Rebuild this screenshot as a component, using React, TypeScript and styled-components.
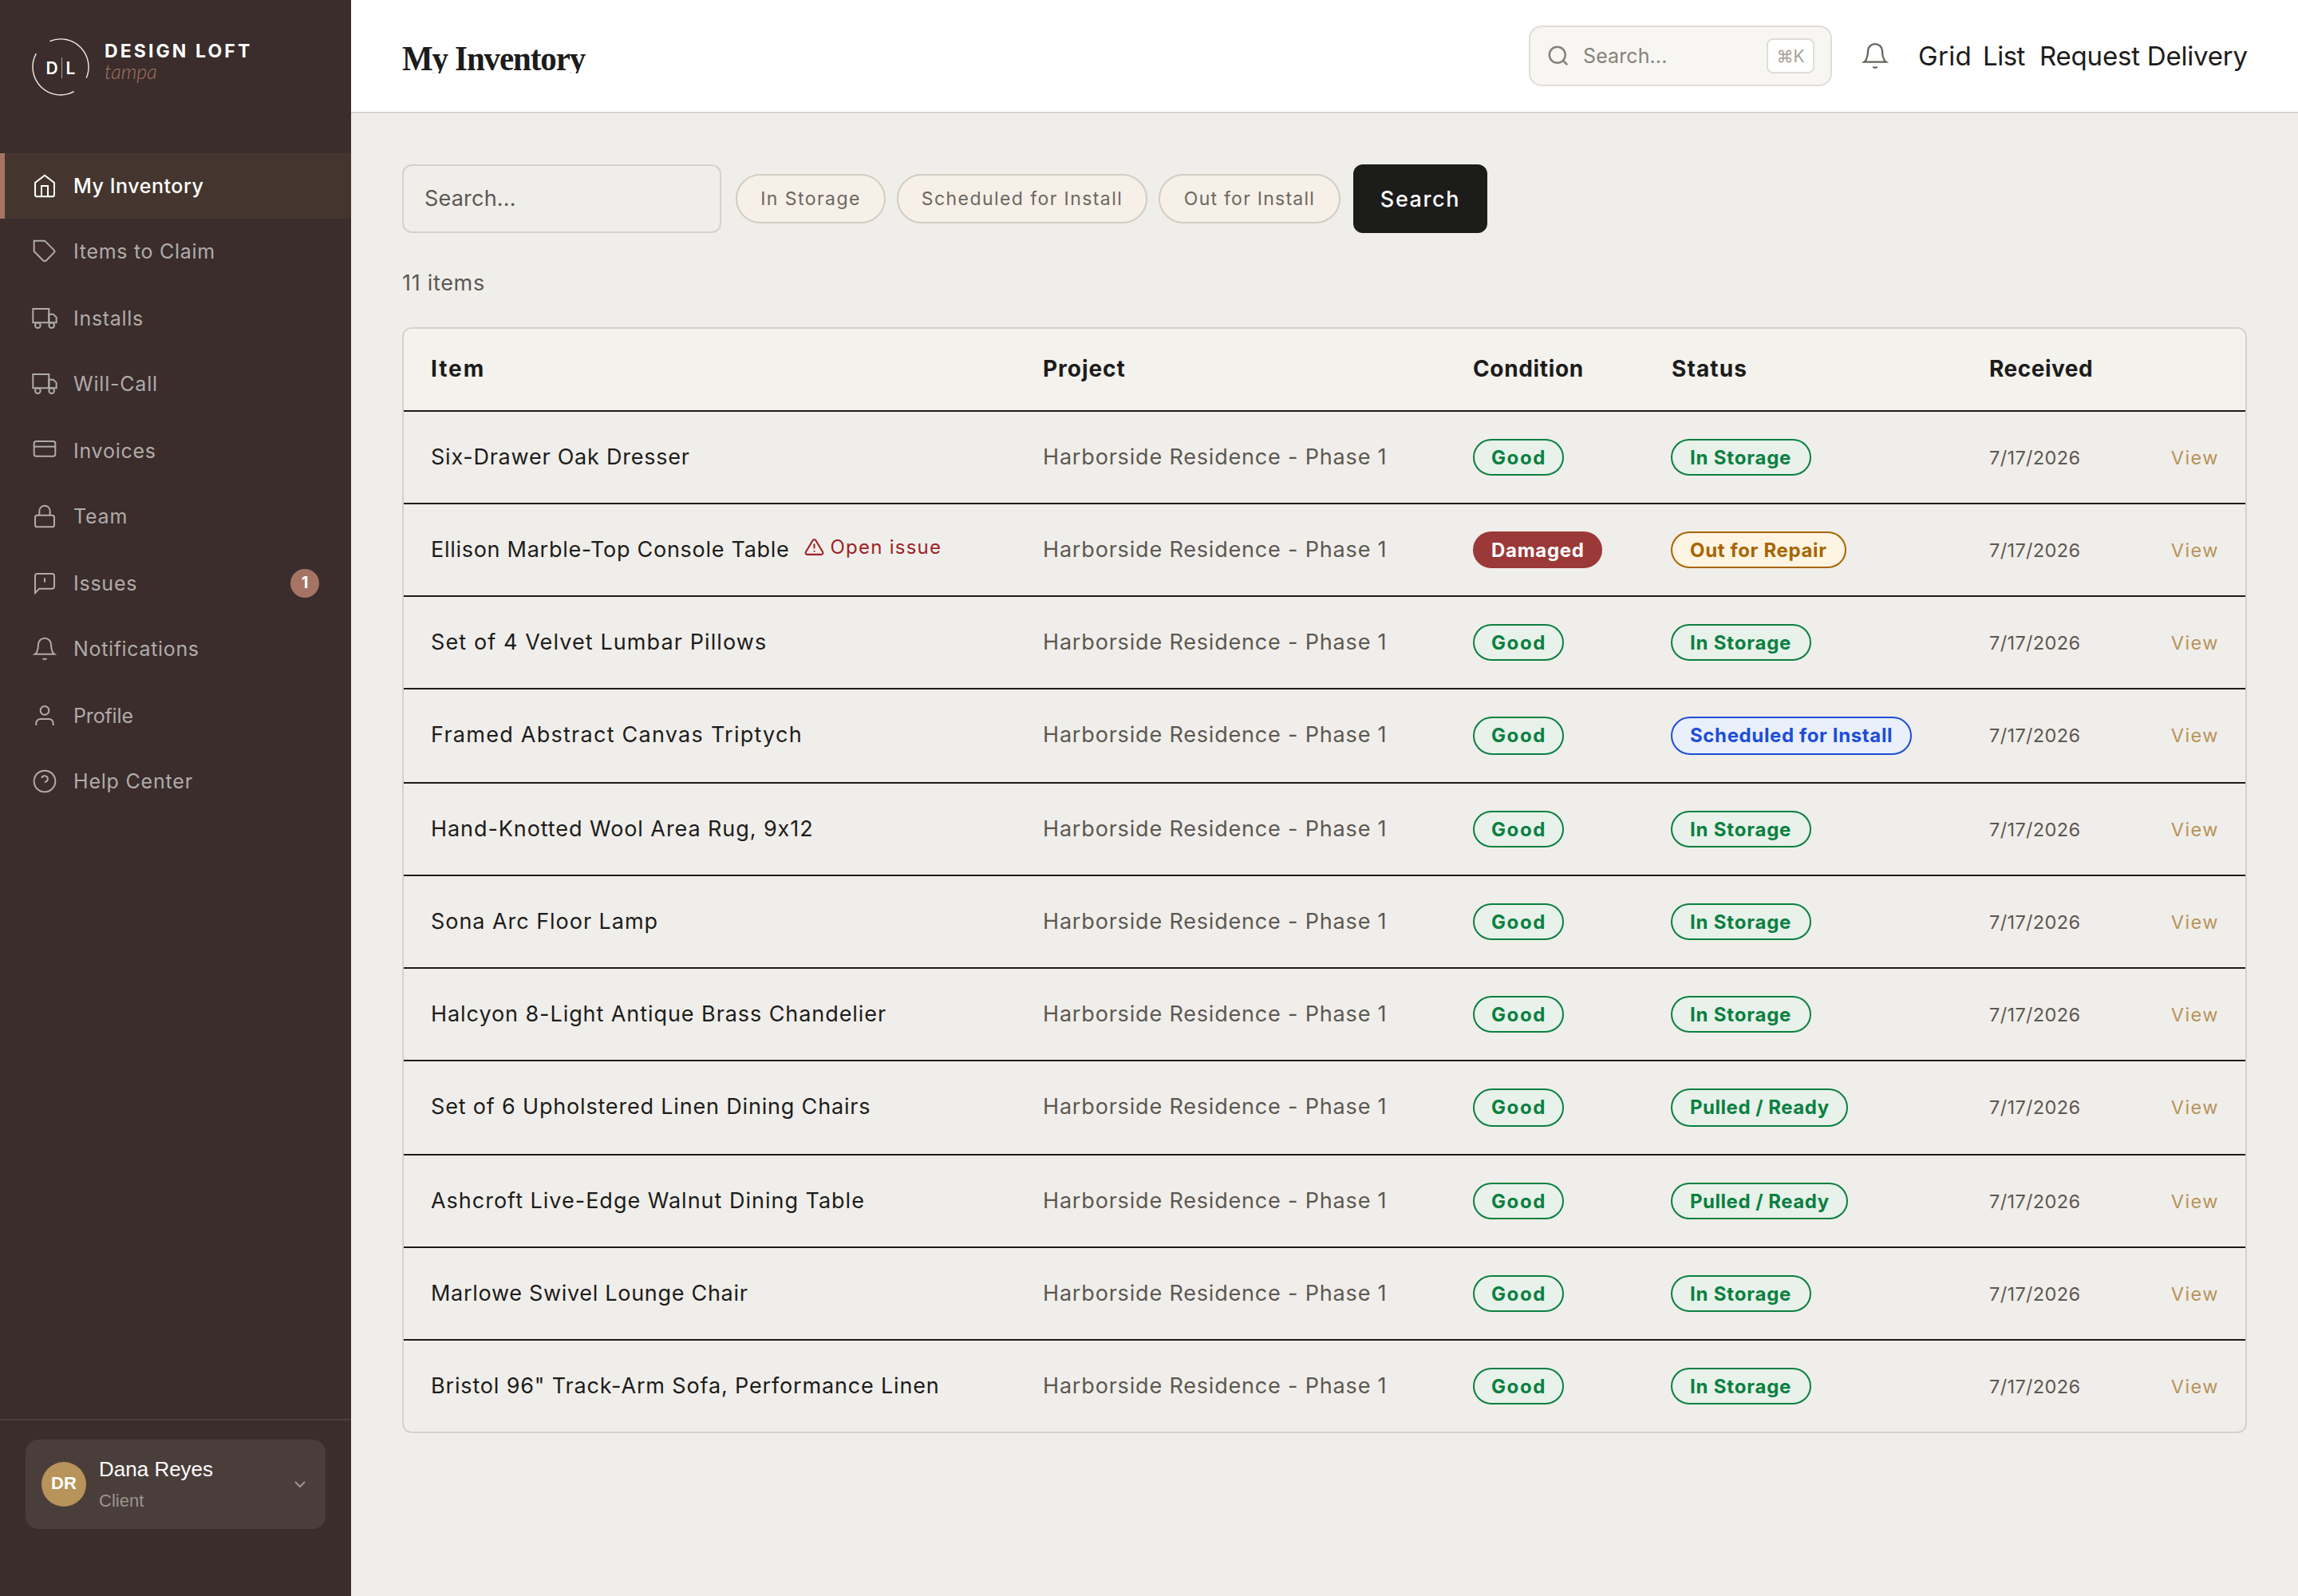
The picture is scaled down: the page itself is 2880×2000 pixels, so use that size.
import React from "react";
import styled, { createGlobalStyle } from "styled-components";

const sans = `Inter, "Liberation Sans", sans-serif`;

const GlobalStyle = createGlobalStyle`
  *, *::before, *::after { box-sizing: border-box; }
  body { margin: 0; background: #f0eeea; font-family: ${sans}; color: #1c1c1b; }
  h1, p { margin: 0; font-weight: inherit; }
`;

/* Text with its own tracking, in pixels */
const Tracked = styled.span<{ $ls: number }>`
  letter-spacing: ${(p) => p.$ls}px;
  white-space: nowrap;
`;

const Page = styled.div`
  display: flex;
  width: 2880px;
  height: 2000px;
  overflow: hidden;
`;

/* ---------- Sidebar ---------- */

const Sidebar = styled.aside`
  display: flex;
  flex-direction: column;
  flex: none;
  width: 440px;
  background: #3a2d2b;
`;

const Brand = styled.div`
  display: flex;
  gap: 19px;
  height: 192px;
  padding: 48px 40px 0;
`;

const BrandMark = styled.svg`
  flex: none;
  width: 72px;
  height: 72px;
  overflow: visible;
  font-family: ${sans};
`;

const BrandText = styled.div`
  display: flex;
  flex-direction: column;
  padding-top: 2px;
`;

const BrandName = styled.span`
  font-size: 23px;
  font-weight: 700;
  line-height: 28px;
  letter-spacing: 3.1px;
  white-space: nowrap;
  color: #fff;
`;

const BrandCity = styled.span`
  margin-top: -2px;
  font-family: Lato, ${sans};
  font-size: 25px;
  font-style: italic;
  font-weight: 300;
  line-height: 26px;
  color: #a67464;
`;

const Nav = styled.nav`
  display: flex;
  flex-direction: column;
  flex: 1;
`;

const NavItem = styled.a<{ $active?: boolean }>`
  display: flex;
  align-items: center;
  gap: 20px;
  height: 82px;
  padding: 0 40px 0 ${(p) => (p.$active ? 34 : 40)}px;
  border-left: ${(p) => (p.$active ? "6px solid #a67464" : "0")};
  background: ${(p) => (p.$active ? "#44362f" : "transparent")};
  color: ${(p) => (p.$active ? "#fff" : "#b0abaa")};
  font-size: 25px;
  font-weight: ${(p) => (p.$active ? 500 : 400)};

  &:nth-child(even) { margin-bottom: 2px; }
`;

const Icon = styled.svg<{ $size: number; $stroke?: number }>`
  flex: none;
  width: ${(p) => p.$size}px;
  height: ${(p) => p.$size}px;
  fill: none;
  stroke: currentColor;
  stroke-width: ${(p) => p.$stroke ?? 1.5};
`;

const NavCount = styled.span`
  display: grid;
  place-items: center;
  width: 36px;
  height: 36px;
  margin-left: auto;
  padding-bottom: 2px;
  border-radius: 50%;
  background: #a67464;
  color: #fff;
  font-size: 20px;
  font-weight: 700;
`;

const SidebarFooter = styled.div`
  height: 222px;
  padding: 24px 32px;
  border-top: 2px solid #4a3e3b;
`;

const UserCard = styled.div`
  display: flex;
  align-items: center;
  height: 112px;
  padding: 0 20px;
  border-radius: 16px;
  background: #4a3e3b;
  font-family: "Liberation Sans", Arial, sans-serif;
`;

const Avatar = styled.span`
  display: grid;
  place-items: center;
  width: 56px;
  height: 56px;
  margin-right: 16px;
  padding-bottom: 2px;
  border-radius: 50%;
  background: #b8935a;
  color: #fff;
  font-size: 22px;
  font-weight: 700;
`;

const UserInfo = styled.div`
  display: flex;
  flex-direction: column;
  flex: 1;
  gap: 6px;
`;

const UserName = styled.span`
  font-size: 26px;
  line-height: 36px;
  color: #fff;
`;

const UserRole = styled.span`
  font-size: 22px;
  line-height: 32px;
  color: #9b9491;
`;

const Chevron = styled(Icon)`
  color: #9b9491;
`;

/* ---------- Header ---------- */

const Content = styled.div`
  display: flex;
  flex-direction: column;
  flex: 1;
  min-width: 0;
`;

const Header = styled.header`
  display: flex;
  align-items: center;
  height: 142px;
  padding: 0 64px;
  border-bottom: 2px solid #d6d4ce;
  background: #fff;
`;

const Title = styled.h1`
  flex: 1;
  height: 44px;
  padding-top: 3px;
  overflow: hidden;
  font-family: "Liberation Serif", serif;
  font-size: 45px;
  font-weight: 700;
  line-height: 44px;
  letter-spacing: -1.2px;
  white-space: nowrap;
  transform: scaleX(0.91);
  transform-origin: left;
`;

const QuickSearch = styled.div`
  display: flex;
  align-items: center;
  gap: 16px;
  width: 380px;
  height: 76px;
  margin-right: 36px;
  padding: 0 20px;
  border: 2px solid #dfddd8;
  border-radius: 16px;
  background: #f7f6f2;
  color: #86827a;
  font-size: 25px;
`;

const Shortcut = styled.kbd`
  display: grid;
  place-items: center;
  width: 60px;
  height: 44px;
  margin-left: auto;
  border: 2px solid #dfddd8;
  border-radius: 8px;
  background: #fff;
  color: #a5a098;
  font-family: ${sans};
  font-size: 21px;
`;

const BellButton = styled.span`
  display: flex;
  margin-right: 36px;
  color: #66635d;
`;

const HeaderLinks = styled.div`
  display: flex;
  width: 412px;
  font-size: 33px;
`;

const HeaderLink = styled(Tracked)<{ $w: number }>`
  width: ${(p) => p.$w}px;
`;

/* ---------- Filters ---------- */

const Main = styled.main`
  padding: 64px;
`;

const Filters = styled.div`
  display: flex;
  align-items: center;
`;

const SearchField = styled.div`
  display: flex;
  align-items: center;
  width: 400px;
  height: 86px;
  margin-right: 18px;
  padding: 0 0 2px 26px;
  border: 2px solid #d4d2cc;
  border-radius: 12px;
  color: #5c5852;
  font-size: 27px;
`;

const Chip = styled.span<{ $w: number }>`
  display: flex;
  align-items: center;
  justify-content: center;
  width: ${(p) => p.$w}px;
  height: 62px;
  margin-right: 14px;
  border: 2px solid #d2cdc4;
  border-radius: 31px;
  background: #f6f0e8;
  color: #6c6760;
  font-size: 23px;
`;

const SearchButton = styled.button`
  width: 168px;
  height: 86px;
  margin-left: 2px;
  padding: 0;
  border: 0;
  border-radius: 12px;
  background: #1c1c1b;
  color: #fff;
  font-family: ${sans};
  font-size: 27px;
  font-weight: 500;
`;

const Count = styled.p`
  height: 118px;
  padding-top: 4px;
  line-height: 118px;
  color: #5c5852;
  font-size: 27px;
`;

/* ---------- Table ---------- */

const Table = styled.div`
  overflow: hidden;
  border: 2px solid #d4d2cc;
  border-radius: 12px;
  font-size: 27px;
`;

const Row = styled.div`
  display: grid;
  grid-template-columns: 767px 539px 249px 398px 198px 1fr;
  align-items: center;
  height: 116px;
  border-bottom: 2px solid #1c1c1b;

  &:nth-child(4n + 1) { height: 118px; padding-bottom: 2px; }
  &:last-child { height: 114px; border-bottom: 0; }
`;

const HeadRow = styled(Row)`
  && { height: 104px; padding-bottom: 2px; }
  background: #f4f2ed;
  font-size: 28px;
  font-weight: 700;
`;

const Cell = styled.div`
  display: flex;
  align-items: center;
  padding-left: 34px;
  white-space: nowrap;
`;

const TextCell = styled(Cell)`
  padding-bottom: 2px;
`;

const ProjectCell = styled(TextCell)`
  color: #5c5852;
`;

const BadgeCell = styled(Cell)`
  padding-left: 33px;
`;

const DateCell = styled(Cell)`
  color: #5c5852;
  font-size: 23.5px;
`;

const LinkCell = styled(Cell)`
  justify-content: flex-end;
  padding-right: 33px;
  color: #b8935a;
  font-size: 23.5px;
`;

const OpenIssue = styled.span`
  display: inline-flex;
  align-items: center;
  gap: 8px;
  margin-left: 18px;
  padding-bottom: 5px;
  color: #9b2226;
  font-size: 24px;
`;

const tones = {
  green: { fg: "#0a8040", bg: "#e8f1ea", line: "#0a8040" },
  red: { fg: "#ffffff", bg: "#9b3838", line: "#9b3838" },
  amber: { fg: "#a86400", bg: "#fef4e2", line: "#a86400" },
  blue: { fg: "#1d4ed8", bg: "#e9effb", line: "#1d4ed8" },
};
type Tone = keyof typeof tones;

const BadgeBox = styled.span<{ $tone: Tone; $w: number }>`
  display: inline-flex;
  align-items: center;
  width: ${(p) => p.$w}px;
  height: 46px;
  margin-left: 1px;
  padding-left: 21px;
  border: 2px solid ${(p) => tones[p.$tone].line};
  border-radius: 24px;
  background: ${(p) => tones[p.$tone].bg};
  color: ${(p) => tones[p.$tone].fg};
  font-size: 24px;
  font-weight: 700;

  ${Row}:nth-child(4n + 1) & { height: 48px; margin-top: 2px; padding-bottom: 1px; }
`;

const StatusBox = styled(BadgeBox)`
  margin-left: 0;
  padding-left: 22px;
`;

/* ---------- Data ---------- */

const icons = {
  home: (
    <>
      <path d="M3 9l9-7 9 7v11a2 2 0 0 1-2 2H5a2 2 0 0 1-2-2z" />
      <path d="M9 22V12h6v10" />
    </>
  ),
  tag: <path d="M20.59 13.41l-7.17 7.17a2 2 0 0 1-2.83 0L2 12V2h10l8.59 8.59a2 2 0 0 1 0 2.82z" />,
  truck: (
    <>
      <path d="M1 3h15v13H1z" />
      <path d="M16 8h4l3 3v5h-7z" />
      <circle cx="5.5" cy="18.5" r="2.5" />
      <circle cx="18.5" cy="18.5" r="2.5" />
    </>
  ),
  card: (
    <>
      <rect x="2" y="3" width="20" height="14" rx="2" />
      <path d="M2 8h20" />
    </>
  ),
  lock: (
    <>
      <rect x="3" y="11" width="18" height="11" rx="2" />
      <path d="M7 11V7a5 5 0 0 1 10 0v4" />
    </>
  ),
  message: (
    <>
      <path d="M21 15a2 2 0 0 1-2 2H7l-4 4V5a2 2 0 0 1 2-2h14a2 2 0 0 1 2 2z" />
      <path d="M12 7v4" />
    </>
  ),
  bell: (
    <>
      <path d="M18 8A6 6 0 0 0 6 8c0 7-3 9-3 9h18s-3-2-3-9" />
      <path d="M13.73 21a2 2 0 0 1-3.46 0" />
    </>
  ),
  user: (
    <>
      <path d="M20 21v-2a4 4 0 0 0-4-4H8a4 4 0 0 0-4 4v2" />
      <circle cx="12" cy="7" r="4" />
    </>
  ),
  help: (
    <>
      <circle cx="12" cy="12" r="10" />
      <path d="M9.09 9a3 3 0 0 1 5.83 1c0 2-3 3-3 3" />
    </>
  ),
};

const nav: { label: string; icon: keyof typeof icons; ls: number; count?: number }[] = [
  { label: "My Inventory", icon: "home", ls: 0.55 },
  { label: "Items to Claim", icon: "tag", ls: 0.7 },
  { label: "Installs", icon: "truck", ls: 0.7 },
  { label: "Will-Call", icon: "truck", ls: 0.8 },
  { label: "Invoices", icon: "card", ls: 0.75 },
  { label: "Team", icon: "lock", ls: 0.8 },
  { label: "Issues", icon: "message", ls: 0.75, count: 1 },
  { label: "Notifications", icon: "bell", ls: 0.66 },
  { label: "Profile", icon: "user", ls: -0.15 },
  { label: "Help Center", icon: "help", ls: 0.8 },
];

const badges: Record<string, { tone: Tone; w: number; ls: number }> = {
  Good: { tone: "green", w: 114, ls: 1.6 },
  Damaged: { tone: "red", w: 162, ls: 0.7 },
  "In Storage": { tone: "green", w: 176, ls: 0.8 },
  "Out for Repair": { tone: "amber", w: 220, ls: 0.66 },
  "Scheduled for Install": { tone: "blue", w: 302, ls: 0.63 },
  "Pulled / Ready": { tone: "green", w: 222, ls: 0.52 },
};

const items: { name: string; ls: number; condition: string; status: string; issue?: boolean }[] = [
  { name: "Six-Drawer Oak Dresser", ls: 0.76, condition: "Good", status: "In Storage" },
  { name: "Ellison Marble-Top Console Table", ls: 0.72, condition: "Damaged", status: "Out for Repair", issue: true },
  { name: "Set of 4 Velvet Lumbar Pillows", ls: 1.1, condition: "Good", status: "In Storage" },
  { name: "Framed Abstract Canvas Triptych", ls: 1.26, condition: "Good", status: "Scheduled for Install" },
  { name: "Hand-Knotted Wool Area Rug, 9x12", ls: 0.92, condition: "Good", status: "In Storage" },
  { name: "Sona Arc Floor Lamp", ls: 0.96, condition: "Good", status: "In Storage" },
  { name: "Halcyon 8-Light Antique Brass Chandelier", ls: 0.93, condition: "Good", status: "In Storage" },
  { name: "Set of 6 Upholstered Linen Dining Chairs", ls: 0.82, condition: "Good", status: "Pulled / Ready" },
  { name: "Ashcroft Live-Edge Walnut Dining Table", ls: 0.99, condition: "Good", status: "Pulled / Ready" },
  { name: "Marlowe Swivel Lounge Chair", ls: 0.7, condition: "Good", status: "In Storage" },
  { name: 'Bristol 96" Track-Arm Sofa, Performance Linen', ls: 0.84, condition: "Good", status: "In Storage" },
];

const columns = [
  { label: "Item", ls: 1.9 },
  { label: "Project", ls: 0.95 },
  { label: "Condition", ls: 0.65 },
  { label: "Status", ls: 1.1 },
  { label: "Received", ls: 0.5 },
];

function Badge({ label, box: Box }: { label: string; box: typeof BadgeBox }) {
  const b = badges[label];
  return (
    <Box $tone={b.tone} $w={b.w}>
      <Tracked $ls={b.ls}>{label}</Tracked>
    </Box>
  );
}

export default function App() {
  return (
    <Page>
      <GlobalStyle />
      <Sidebar>
        <Brand>
          <BrandMark viewBox="0 0 72 72" fill="none" stroke="#f3ebe7" strokeWidth="1.4">
            <path d="M22.3 3.7A35 35 0 0 1 68.2 49.7" />
            <path d="M52.8 66.7A35 35 0 0 1 5.3 19.2" />
            <path d="M37.5 24v26" stroke="#a89f9c" strokeWidth="1" />
            <g fill="#fff" stroke="none" fontSize="21" fontWeight="600">
              <text x="17.6" y="45">D</text>
              <text x="42.5" y="45">L</text>
            </g>
          </BrandMark>
          <BrandText>
            <BrandName>DESIGN LOFT</BrandName>
            <BrandCity>tampa</BrandCity>
          </BrandText>
        </Brand>
        <Nav>
          {nav.map((n, i) => (
            <NavItem key={n.label} $active={i === 0}>
              <Icon $size={32} viewBox="0 0 24 24">{icons[n.icon]}</Icon>
              <Tracked $ls={n.ls}>{n.label}</Tracked>
              {n.count && <NavCount>{n.count}</NavCount>}
            </NavItem>
          ))}
        </Nav>
        <SidebarFooter>
          <UserCard>
            <Avatar>DR</Avatar>
            <UserInfo>
              <UserName>Dana Reyes</UserName>
              <UserRole>Client</UserRole>
            </UserInfo>
            <Chevron $size={24} $stroke={2} viewBox="0 0 24 24">
              <path d="M6 9l6 6 6-6" />
            </Chevron>
          </UserCard>
        </SidebarFooter>
      </Sidebar>

      <Content>
        <Header>
          <Title>My Inventory</Title>
          <QuickSearch>
            <Icon $size={30} $stroke={2} viewBox="0 0 24 24">
              <circle cx="11" cy="11" r="8" />
              <path d="M21 21l-4.35-4.35" />
            </Icon>
            <Tracked $ls={0.1}>Search...</Tracked>
            <Shortcut>⌘K</Shortcut>
          </QuickSearch>
          <BellButton>
            <Icon $size={36} viewBox="0 0 24 24">{icons.bell}</Icon>
          </BellButton>
          <HeaderLinks>
            <HeaderLink $ls={0.3} $w={81}>Grid</HeaderLink>
            <HeaderLink $ls={-0.5} $w={71}>List</HeaderLink>
            <HeaderLink $ls={-0.2} $w={260}>Request Delivery</HeaderLink>
          </HeaderLinks>
        </Header>

        <Main>
          <Filters>
            <SearchField>
              <Tracked $ls={0.2}>Search...</Tracked>
            </SearchField>
            <Chip $w={188}><Tracked $ls={1.45}>In Storage</Tracked></Chip>
            <Chip $w={314}><Tracked $ls={1.42}>Scheduled for Install</Tracked></Chip>
            <Chip $w={228}><Tracked $ls={1.25}>Out for Install</Tracked></Chip>
            <SearchButton><Tracked $ls={1.6}>Search</Tracked></SearchButton>
          </Filters>
          <Count><Tracked $ls={0.7}>11 items</Tracked></Count>

          <Table>
            <HeadRow>
              {columns.map((c) => (
                <Cell key={c.label}><Tracked $ls={c.ls}>{c.label}</Tracked></Cell>
              ))}
            </HeadRow>
            {items.map((it) => (
              <Row key={it.name}>
                <TextCell>
                  <Tracked $ls={it.ls}>{it.name}</Tracked>
                  {it.issue && (
                    <OpenIssue>
                      <Icon $size={25} $stroke={2} viewBox="0 0 24 24" strokeLinejoin="round" strokeLinecap="round">
                        <path d="M10.29 3.86L1.82 18a2 2 0 0 0 1.71 3h16.94a2 2 0 0 0 1.71-3L13.71 3.86a2 2 0 0 0-3.42 0z" />
                        <path d="M12 9v4M12 17h.01" />
                      </Icon>
                      <Tracked $ls={1.25}>Open issue</Tracked>
                    </OpenIssue>
                  )}
                </TextCell>
                <ProjectCell><Tracked $ls={0.82}>Harborside Residence - Phase 1</Tracked></ProjectCell>
                <BadgeCell><Badge label={it.condition} box={BadgeBox} /></BadgeCell>
                <BadgeCell><Badge label={it.status} box={StatusBox} /></BadgeCell>
                <DateCell><Tracked $ls={0.35}>7/17/2026</Tracked></DateCell>
                <LinkCell><Tracked $ls={1.47}>View</Tracked></LinkCell>
              </Row>
            ))}
          </Table>
        </Main>
      </Content>
    </Page>
  );
}
